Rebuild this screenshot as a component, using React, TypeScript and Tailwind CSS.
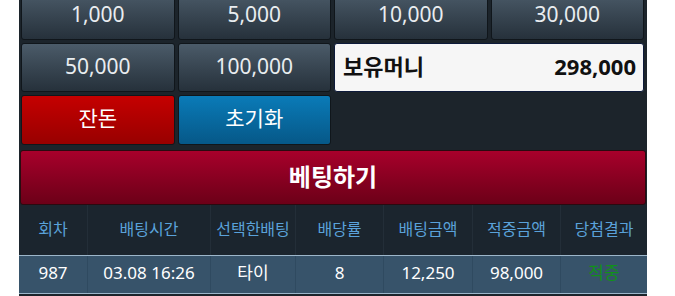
import React from "react";

const font = { fontFamily: '"Noto Sans", "Noto Sans CJK KR", sans-serif' };

const chips = ["1,000", "5,000", "10,000", "30,000", "50,000", "100,000"];

function Chip({ label }: { label: string }) {
  return (
    <button className="h-[49px] pb-[2px] rounded-[3px] border border-[#10161b] bg-gradient-to-b from-[#4b5b69] to-[#26313b] text-[21px] text-[#e9edf0] flex items-center justify-center">
      {label}
    </button>
  );
}

const headers = ["회차", "배팅시간", "선택한배팅", "배당률", "배팅금액", "적중금액", "당첨결과"];
const widths = ["w-[69px]", "w-[123px]", "w-[85px]", "w-[88px]", "w-[89px]", "w-[88px]", "w-[86px]"];
const row = ["987", "03.08 16:26", "타이", "8", "12,250", "98,000", "적중"];

export default function App() {
  return (
    <div className="w-[675px] h-[296px] bg-white overflow-hidden" style={font}>
      <div className="ml-[19px] w-[628px] h-[320px] bg-[#1c242b] -mt-[9px]">
        <div className="grid grid-cols-4 gap-[3px] pl-[2px] pr-[3px]">
          <Chip label={chips[0]} />
          <Chip label={chips[1]} />
          <Chip label={chips[2]} />
          <Chip label={chips[3]} />
          <Chip label={chips[4]} />
          <Chip label={chips[5]} />
          <div className="col-span-2 h-[49px] pb-[2px] rounded-[3px] border border-[#0d1a3a] bg-[#f6f6f6] flex items-center justify-between pl-[8px] pr-[7px] text-[22px] font-bold text-[#111]">
            <span>보유머니</span>
            <span>298,000</span>
          </div>
          <button className="h-[50px] pb-[2px] rounded-[3px] border border-[#10161b] bg-gradient-to-b from-[#c50000] to-[#980000] text-[21px] text-white flex items-center justify-center">
            잔돈
          </button>
          <button className="h-[50px] pb-[2px] rounded-[3px] border border-[#10161b] bg-gradient-to-b from-[#0a7bb8] to-[#065888] text-[21px] text-white flex items-center justify-center">
            초기화
          </button>
        </div>
        <div className="mx-[1px] mt-[5px] h-[55px] pb-[2px] rounded-[3px] border border-[#2a0a10] bg-gradient-to-b from-[#a8002b] to-[#6c0018] flex items-center justify-center text-[24px] font-bold text-white">
          베팅하기
        </div>
        <div className="flex h-[51px] bg-[#1b252e] border-b border-[#9cb6ca]">
          {headers.map((h, i) => (
            <div
              key={h}
              className={`${widths[i]} pb-[2px] flex items-center justify-center text-[16px] text-[#5aa2da] ${i < 6 ? "border-r border-[#232e38]" : ""}`}
            >
              {h}
            </div>
          ))}
        </div>
        <div className="flex h-[38px] bg-[#37536a] border-b border-[#9cb6ca]">
          {row.map((c, i) => (
            <div
              key={i}
              className={`${widths[i]} pb-[3px] flex items-center justify-center text-[17px] ${i === 6 ? "text-[#12901a]" : "text-white"} ${i < 6 ? "border-r border-[#2f4a60]" : ""}`}
            >
              {c}
            </div>
          ))}
        </div>
      </div>
    </div>
  );
}
